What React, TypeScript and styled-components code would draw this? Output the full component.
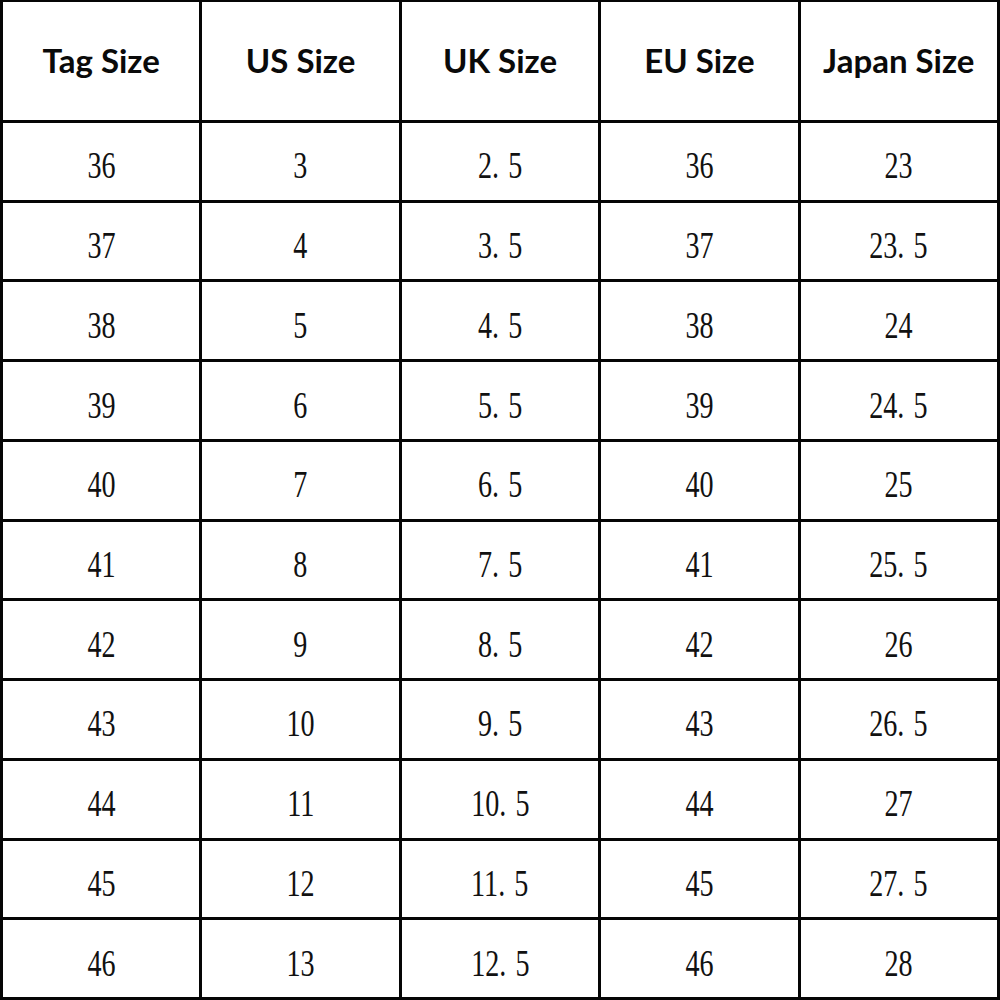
import styled, { createGlobalStyle } from 'styled-components';

const GlobalStyle = createGlobalStyle`
  html, body {
    margin: 0;
    padding: 0;
    background: #ffffff;
  }
`;

const Table = styled.div`
  width: 1000px;
  height: 1000px;
  box-sizing: border-box;
  display: grid;
  grid-template-columns: repeat(5, 1fr);
  grid-template-rows: 118px repeat(11, 1fr);
  gap: 3px;
  padding: 3px;
  padding-top: 2px;
  background: #050505;
`;

const HeadCell = styled.div`
  background: #fff;
  display: flex;
  align-items: center;
  justify-content: center;
  font-family: Lato, "Open Sans", sans-serif;
  font-weight: 700;
  font-size: 33px;
  color: #0a0a0a;
  padding-bottom: 2px;
`;

const Cell = styled.div`
  background: #fff;
  display: flex;
  align-items: center;
  justify-content: center;
  padding-top: 9px;
  box-sizing: border-box;
`;

const Num = styled.span`
  display: inline-block;
  font-family: "Liberation Serif", "Times New Roman", serif;
  font-size: 37px;
  line-height: 1;
  color: #111;
  transform: scaleX(0.76);
`;

const Dot = styled.span`
  margin-right: 12px;
`;

const headers = ['Tag Size', 'US Size', 'UK Size', 'EU Size', 'Japan Size'];

const rows = [
  ['36', '3', '2.5', '36', '23'],
  ['37', '4', '3.5', '37', '23.5'],
  ['38', '5', '4.5', '38', '24'],
  ['39', '6', '5.5', '39', '24.5'],
  ['40', '7', '6.5', '40', '25'],
  ['41', '8', '7.5', '41', '25.5'],
  ['42', '9', '8.5', '42', '26'],
  ['43', '10', '9.5', '43', '26.5'],
  ['44', '11', '10.5', '44', '27'],
  ['45', '12', '11.5', '45', '27.5'],
  ['46', '13', '12.5', '46', '28'],
];

function Value({ text }: { text: string }) {
  const [whole, frac] = text.split('.');
  return (
    <Num>
      {whole}
      {frac !== undefined && (
        <>
          <Dot>.</Dot>
          {frac}
        </>
      )}
    </Num>
  );
}

export default function App() {
  return (
    <>
      <GlobalStyle />
      <Table>
        {headers.map((h) => (
          <HeadCell key={h}>{h}</HeadCell>
        ))}
        {rows.map((row, i) =>
          row.map((v, j) => (
            <Cell key={`${i}-${j}`}>
              <Value text={v} />
            </Cell>
          ))
        )}
      </Table>
    </>
  );
}
